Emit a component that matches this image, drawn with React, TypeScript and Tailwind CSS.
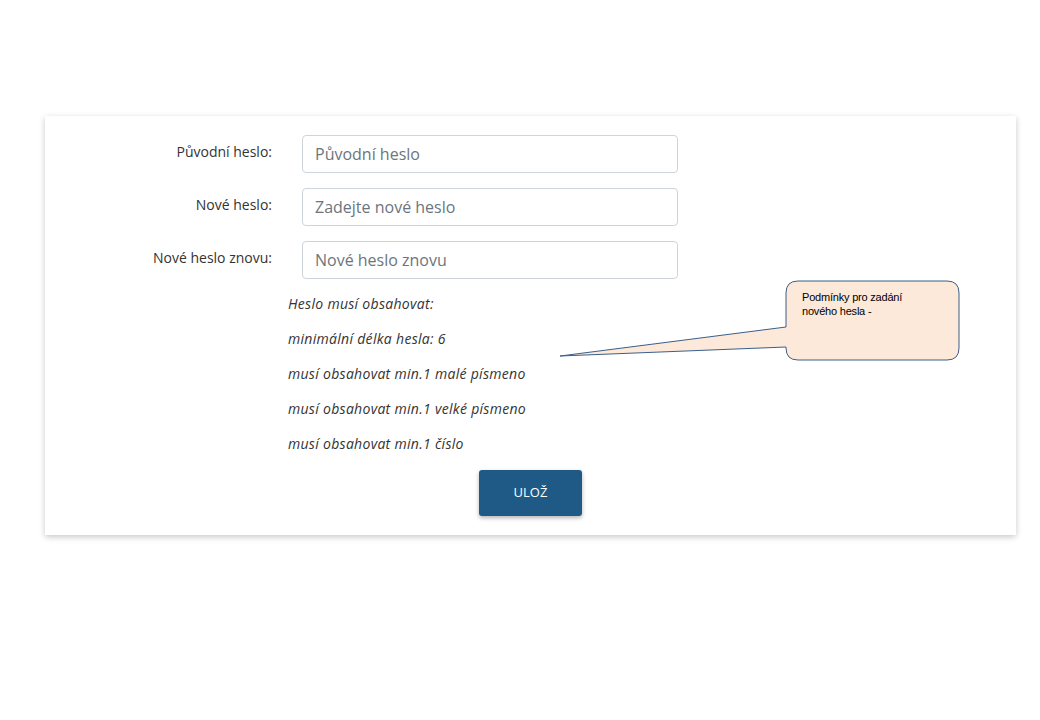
import React from "react";

const fields = [
  { label: "Původní heslo:", placeholder: "Původní heslo" },
  { label: "Nové heslo:", placeholder: "Zadejte nové heslo" },
  { label: "Nové heslo znovu:", placeholder: "Nové heslo znovu" },
];

const rules = [
  "Heslo musí obsahovat:",
  "minimální délka hesla: 6",
  "musí obsahovat min.1 malé písmeno",
  "musí obsahovat min.1 velké písmeno",
  "musí obsahovat min.1 číslo",
];

const App: React.FC = () => {
  return (
    <div className="min-h-screen w-[1040px] bg-white font-['Open_Sans',sans-serif] pt-[116px] pl-[45px]">
      {/* Card */}
      <div className="relative w-[971px] bg-white shadow-[0_2px_6px_rgba(0,0,0,0.22)] pt-[19px] pb-[19px]">
        <form className="flex flex-col">
          <div className="flex flex-col gap-[15px]">
            {fields.map((f) => (
              <div key={f.label} className="flex items-center gap-[30px]">
                <label className="w-[227px] text-right text-[14px] text-[#333] -mt-[5px]">
                  {f.label}
                </label>
                <input
                  type="password"
                  placeholder={f.placeholder}
                  className="w-[376px] h-[38px] rounded-[4px] border border-[#ced4da] px-[12px] text-[16px] text-[#495057] placeholder:text-[#6c757d] focus:outline-none"
                />
              </div>
            ))}
          </div>

          {/* Password rules */}
          <div className="ml-[243px] mt-[15px] flex flex-col gap-[15px]">
            {rules.map((r) => (
              <p key={r} className="text-[14px] leading-[20px] italic tracking-[0.3px] text-[#333]">
                {r}
              </p>
            ))}
          </div>

          <div className="flex justify-center mt-[16px]">
            <button
              type="button"
              className="w-[103px] h-[46px] rounded-[3px] bg-[#1f5a86] text-white text-[13px] shadow-[0_2px_4px_rgba(0,0,0,0.3)]"
            >
              ULOŽ
            </button>
          </div>
        </form>

        {/* Callout note */}
        <div className="absolute left-[510px] top-[159px] w-[410px] h-[90px]">
          <svg width="410" height="90" viewBox="0 0 410 90" className="absolute inset-0">
            <path
              d="M243 6 H392 Q404 6 404 18 V73 Q404 85 392 85 H243 Q231 85 231 73 V72 L5 81 L231 52 V18 Q231 6 243 6 Z"
              fill="#fde9d9"
              stroke="#3a5f8b"
              strokeWidth="1"
            />
          </svg>
          <p className="absolute left-[247px] top-[15px] w-[112px] text-[11px] leading-[14px] text-black font-['Liberation_Sans',sans-serif] tracking-[-0.2px]">
            Podmínky pro zadání nového hesla -
          </p>
        </div>
      </div>
    </div>
  );
};

export default App;
